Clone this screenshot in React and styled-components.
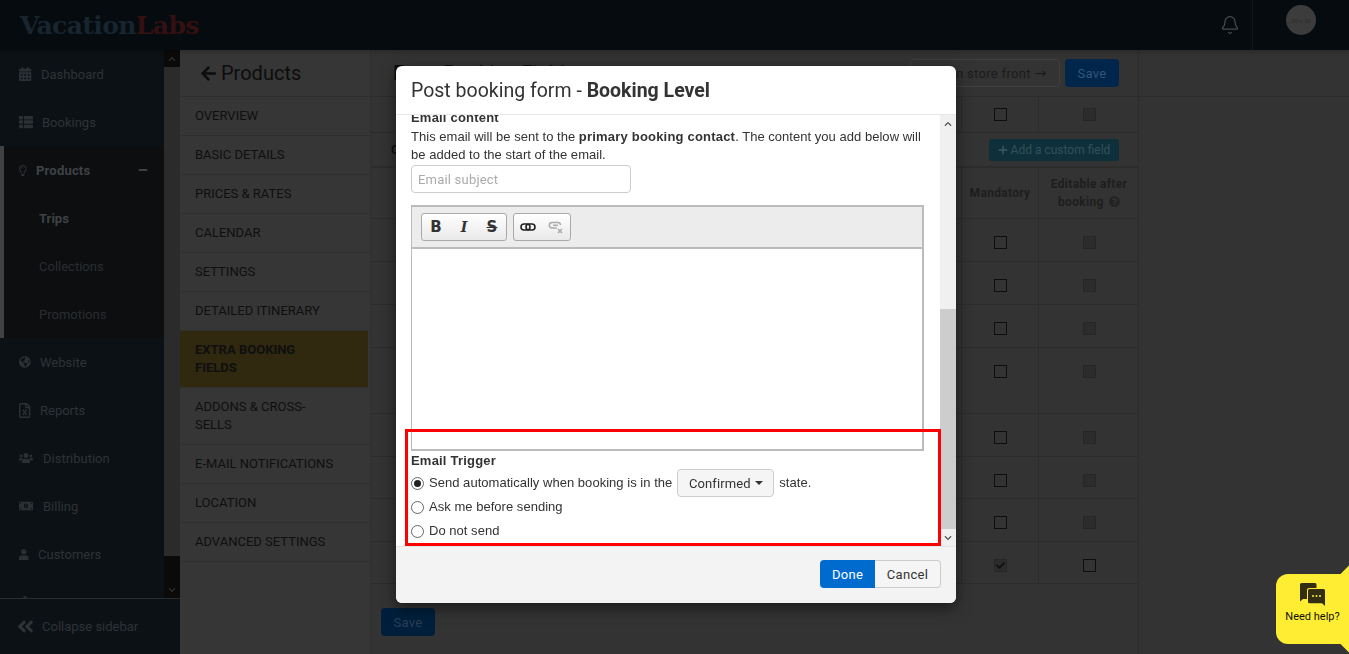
import React from 'react';
import styled, { createGlobalStyle } from 'styled-components';
import {
  FaCalendarAlt, FaThList, FaRegLightbulb, FaGlobeAmericas, FaRegFileExcel, FaUsers,
  FaMoneyBillAlt, FaUser, FaCog, FaMinus, FaAngleDoubleLeft, FaArrowLeft, FaPlus,
  FaQuestionCircle, FaChevronUp, FaChevronDown, FaCheck,
} from 'react-icons/fa';
import { Bell } from 'lucide-react';

const GlobalStyle = createGlobalStyle`
  html, body { margin: 0; height: 100%; overflow: hidden; background: #333; }
  body { font-family: Roboto, "Liberation Sans", sans-serif; font-size: 13px; color: #333; }
  * { box-sizing: border-box; }
`;

const Page = styled.div`
  height: 654px;
  display: flex;
  flex-direction: column;
`;

/* top bar */
const TopBar = styled.header`
  height: 50px;
  flex: none;
  background: #060b10;
  display: flex;
  align-items: center;
  padding-left: 20px;
  position: relative;
  z-index: 1;
  box-shadow: 0 2px 5px rgba(0, 0, 0, 0.2);
`;

const Logo = styled.div`
  font-family: "DejaVu Serif", serif;
  font-weight: 700;
  font-size: 25px;
  letter-spacing: -0.6px;
  color: #18242e;
  flex: 1;
  span { color: #351010; }
`;

const BellBox = styled.div`
  width: 44px;
  height: 50px;
  display: flex;
  align-items: center;
  justify-content: center;
  color: #4a4c4e;
`;

const UserBox = styled.div`
  width: 97px;
  height: 50px;
  border-left: 1px solid #14181c;
  padding: 5px 0 0 33px;
`;

const Avatar = styled.div`
  width: 30px;
  height: 30px;
  border-radius: 50%;
  background: #3c3c3c;
  color: #2b2b2b;
  font-size: 6px;
  display: flex;
  align-items: center;
  justify-content: center;
`;

const Shell = styled.div`
  flex: 1;
  display: flex;
  min-height: 0;
`;

/* dark sidebar */
const Sidebar = styled.aside`
  width: 180px;
  flex: none;
  background: #0c1115;
  display: flex;
  flex-direction: column;
`;

const NavArea = styled.div`
  flex: 1;
  display: flex;
  min-height: 0;
  overflow: hidden;
`;

const NavList = styled.nav`
  width: 164px;
  flex: none;
`;

const NavItem = styled.div`
  height: 48px;
  display: flex;
  align-items: center;
  padding-left: ${(p) => (p.$active ? 15 : 19)}px;
  gap: ${(p) => p.$gap}px;
  color: #2e3337;
  font-size: 13px;
  svg { color: #2b3035; flex: none; }
`;

const ProductsGroup = styled.div`
  background: #0d0e10;
  border-left: 4px solid #414141;
`;

const ProductsHead = styled(NavItem)`
  color: #3e4246;
  font-weight: 700;
  letter-spacing: 0.2px;
  padding-right: 16px;
  svg:last-child { margin-left: auto; color: #3e4246; font-size: 10px; }
`;

const SubItem = styled.div`
  height: 48px;
  display: flex;
  align-items: center;
  padding-left: 35px;
  color: ${(p) => (p.$active ? '#3e4144' : '#2a2d30')};
  font-weight: ${(p) => (p.$active ? 700 : 400)};
`;

const NavScroll = styled.div`
  width: 16px;
  flex: none;
  display: flex;
  flex-direction: column;
  background: #0a0a0b;
  color: #2e2e2e;
`;

const NavArrow = styled.div`
  height: 17px;
  flex: none;
  display: flex;
  align-items: center;
  justify-content: center;
  font-size: 8px;
`;

const NavThumb = styled.div`
  height: 489px;
  flex: none;
  background: #2b2b2b;
`;

const NavSpacer = styled.div`
  flex: 1;
`;

const Collapse = styled.div`
  height: 56px;
  flex: none;
  border-top: 1px solid #2a2d30;
  display: flex;
  align-items: center;
  padding-left: 16px;
  gap: 7px;
  color: #2e3337;
  svg { color: #2e3337; }
`;

/* product menu */
const ProductNav = styled.aside`
  width: 191px;
  flex: none;
  background: #363636;
  border-right: 1px solid #2f2f2f;
`;

const ProductTitle = styled.div`
  height: 47px;
  display: flex;
  align-items: center;
  gap: 4px;
  padding-left: 20px;
  font-size: 20px;
  color: #0d0d0d;
  border-bottom: 1px solid #2f2f2f;
  svg { font-size: 17px; }
`;

const MenuItem = styled.div`
  padding: 10px 30px 10px 15px;
  line-height: 18px;
  font-size: 13px;
  color: #0f0f0f;
  text-transform: uppercase;
  border-bottom: 1px solid #2f2f2f;
  font-weight: ${(p) => (p.$active ? 700 : 400)};
  background: ${(p) => (p.$active ? '#30280f' : 'transparent')};
  margin-right: ${(p) => (p.$active ? 2 : 0)}px;
`;

/* main table */
const Main = styled.main`
  width: 768px;
  flex: none;
  border-right: 1px solid #2c2c2c;
`;

const MainHead = styled.div`
  height: 47px;
  display: flex;
  align-items: center;
  padding: 0 19px 0 22px;
  gap: 5px;
  border-bottom: 1px solid #2c2c2c;
`;

const MainTitle = styled.div`
  flex: 1;
  font-size: 20px;
  font-weight: 500;
  color: #0c0c0c;
`;

const GhostButton = styled.div`
  width: 150px;
  height: 28px;
  padding-right: 8px;
  border: 1px solid #3f3f3f;
  border-radius: 4px;
  display: flex;
  align-items: center;
  justify-content: center;
  gap: 4px;
  color: #1c1c1c;
  letter-spacing: 0.3px;
  white-space: nowrap;
`;

const GhostArrow = styled.span`
  font-family: "DejaVu Sans", sans-serif;
  font-size: 14px;
  letter-spacing: 0;
`;

const SaveButton = styled.div`
  width: 54px;
  height: 28px;
  border-radius: 4px;
  background: #01264c;
  color: #34547a;
  display: flex;
  align-items: center;
  justify-content: center;
  letter-spacing: 0.3px;
`;

const Row = styled.div`
  height: ${(p) => p.$h}px;
  display: grid;
  grid-template-columns: 590px 77px 101px;
  border-bottom: 1px solid #2c2c2c;
`;

const Cell = styled.div`
  display: flex;
  align-items: center;
  justify-content: center;
  border-left: 1px solid #2c2c2c;
  &:first-child { border-left: 0; }
`;

const CheckCell = styled(Cell)`
  align-items: flex-start;
  padding-top: 17px;
`;

const HeadRow = styled(Row)`
  border-top: 2px solid #2c2c2c;
`;

const HeadCell = styled(Cell)`
  font-weight: 700;
  font-size: 12px;
  line-height: 18px;
  letter-spacing: 0.3px;
  color: #1e1e1e;
  text-align: center;
  svg { vertical-align: -1px; margin-left: 2px; color: #232323; font-size: 11px; }
`;

const CustomRow = styled.div`
  height: 33px;
  display: flex;
  align-items: center;
  justify-content: space-between;
  padding: 0 19px 0 20px;
`;

const CustomTitle = styled.div`
  font-weight: 700;
  color: #111;
`;

const AddButton = styled.div`
  width: 130px;
  height: 22px;
  border-radius: 3px;
  background: #0e303b;
  color: #33505c;
  display: flex;
  align-items: center;
  justify-content: center;
  gap: 3px;
  font-size: 12px;
  svg { font-size: 10px; }
`;

const Check = styled.span`
  width: 13px;
  height: 13px;
  display: flex;
  align-items: center;
  justify-content: center;
  color: #111;
  border: 1px solid ${(p) => (p.$off ? '#262626' : '#0d0d0d')};
  background: ${(p) => (p.$off ? '#2c2c2c' : 'transparent')};
  svg { font-size: 9px; }
`;

const BottomSave = styled(SaveButton)`
  margin: 24px 0 0 10px;
  background: #011f3c;
  color: #2a3f55;
`;

const RightFill = styled.div`
  flex: 1;
`;

const RightHead = styled.div`
  height: 47px;
  border-bottom: 1px solid #2c2c2c;
`;

/* modal */
const Modal = styled.section`
  position: fixed;
  z-index: 2;
  top: 66px;
  left: 396px;
  width: 560px;
  height: 537px;
  background: #fff;
  border-radius: 6px;
  box-shadow: 0 5px 15px rgba(0, 0, 0, 0.5);
  display: flex;
  flex-direction: column;
  overflow: hidden;
  font-family: "Liberation Sans", Arial, sans-serif;
`;

const ModalHeader = styled.div`
  height: 49px;
  flex: none;
  padding: 0 15px;
  display: flex;
  align-items: center;
  font-family: Roboto, sans-serif;
  font-size: 19.5px;
  color: #333;
  border-bottom: 1px solid #e8e8e8;
  white-space: pre;
  b { font-weight: 700; }
`;

const ModalBody = styled.div`
  flex: 1;
  min-height: 0;
  display: flex;
`;

const BodyContent = styled.div`
  flex: 1;
  min-width: 0;
  overflow: hidden;
  padding: 0 16px 0 15px;
  font-size: 13px;
  line-height: 18px;
  letter-spacing: 0.03px;
  strong { letter-spacing: 0.2px; }
`;

const Label = styled.div`
  font-weight: 700;
  letter-spacing: 0.2px;
  margin-top: ${(p) => p.$top}px;
`;

const Intro = styled.div`
  margin-top: 1px;
`;

const SubjectInput = styled.input`
  display: block;
  width: 220px;
  height: 28px;
  margin-top: 1px;
  padding: 0 6px;
  border: 1px solid #ccc;
  border-radius: 4px;
  font: 13px Roboto, sans-serif;
  letter-spacing: 0.2px;
  &::placeholder { color: #aaa; }
`;

const Editor = styled.div`
  margin-top: 12px;
  height: 246px;
  border: 2px solid #bbb;
  border-width: 2px 2px 2px 1px;
  display: flex;
  flex-direction: column;
`;

const Toolbar = styled.div`
  height: 42px;
  flex: none;
  background: #ececec;
  border-bottom: 2px solid #bbb;
  display: flex;
  align-items: center;
  gap: 6px;
  padding-left: 9px;
`;

const ToolGroup = styled.div`
  height: 28px;
  display: flex;
  border: 1px solid #aaa;
  border-radius: 3px;
  background: linear-gradient(#fff, #e9e9e9);
`;

const ToolButton = styled.div`
  width: 28px;
  display: flex;
  align-items: center;
  justify-content: center;
  font-family: ${(p) => (p.$italic ? '"DejaVu Serif", serif' : '"DejaVu Sans", sans-serif')};
  font-size: ${(p) => (p.$italic ? 14 : 15)}px;
  font-weight: 700;
  color: #333;
  font-style: ${(p) => (p.$italic ? 'italic' : 'normal')};
  text-decoration: ${(p) => (p.$strike ? 'line-through' : 'none')};
`;

const RadioRow = styled.label`
  height: 24px;
  display: flex;
  align-items: center;
  gap: 5px;
  margin-top: ${(p) => (p.$first ? 1 : 0)}px;
`;

const Radio = styled.span`
  width: 13px;
  height: 13px;
  flex: none;
  border: 1px solid #666;
  border-radius: 50%;
  display: flex;
  align-items: center;
  justify-content: center;
  &::after {
    content: '';
    width: 7px;
    height: 7px;
    border-radius: 50%;
    background: ${(p) => (p.$on ? '#222' : 'transparent')};
  }
`;

const StateButton = styled.div`
  width: 97px;
  height: 28px;
  border: 1px solid #ccc;
  border-radius: 4px;
  background: #f5f5f5;
  display: flex;
  align-items: center;
  justify-content: center;
  gap: 4px;
  font: 13px Roboto, sans-serif;
  letter-spacing: 0.1px;
  &::after {
    content: '';
    border: 4px solid transparent;
    border-top-color: #333;
    border-bottom: 0;
  }
`;

const ScrollTrack = styled.div`
  width: 16px;
  flex: none;
  background: #f0f0f0;
  display: flex;
  flex-direction: column;
  color: #555;
`;

const ScrollArrow = styled.div`
  height: 17px;
  flex: none;
  display: flex;
  align-items: center;
  justify-content: center;
  font-size: 8px;
`;

const ScrollGap = styled.div`
  height: 177px;
  flex: none;
`;

const ScrollThumb = styled.div`
  flex: 1;
  background: #cdcdcd;
`;

const ModalFooter = styled.div`
  height: 57px;
  flex: none;
  background: #f3f3f3;
  border-top: 1px solid #e5e5e5;
  padding: 13px 15px 0 0;
  display: flex;
  justify-content: flex-end;
  font-family: Roboto, sans-serif;
`;

const DoneButton = styled.div`
  width: 55px;
  height: 28px;
  background: #006bcf;
  color: #fff;
  border-radius: 4px 0 0 4px;
  display: flex;
  align-items: center;
  justify-content: center;
  letter-spacing: 0.3px;
`;

const CancelButton = styled(DoneButton)`
  width: 66px;
  background: #f5f5f5;
  color: #333;
  border: 1px solid #ccc;
  border-left: 0;
  border-radius: 0 4px 4px 0;
`;

const Highlight = styled.div`
  position: absolute;
  left: 9px;
  top: 363px;
  width: 536px;
  height: 117px;
  border: 3px solid #f00;
  pointer-events: none;
`;

/* chat bubble */
const Chat = styled.div`
  position: fixed;
  z-index: 3;
  right: 0;
  top: 574px;
  width: 73px;
  height: 70px;
  background: #ffed33;
  border-radius: 12px 0 0 12px;
  display: flex;
  flex-direction: column;
  align-items: center;
  padding-top: 9px;
  gap: 3px;
  font-size: 11px;
  color: #111;
  &::before, &::after {
    content: '';
    position: absolute;
    right: -6px;
    width: 12px;
    height: 12px;
    background: #ffed33;
    transform: rotate(45deg);
  }
  &::before { top: -6px; }
  &::after { bottom: -6px; }
`;

const menu = ['Overview', 'Basic details', 'Prices & rates', 'Calendar', 'Settings', 'Detailed itinerary', 'Extra booking fields', 'Addons & cross-sells', 'E-mail notifications', 'Location', 'Advanced settings'];

const rows = [
  [43, 0], [43, 0], [43, 0], [66, 0], [43, 0], [42, 0], [43, 0], [42, 1],
];

const LEFT = 'xMinYMid';

const LinkIcon = () => (
  <svg width="16" height="16" viewBox="0 0 16 16" fill="none" stroke="#222" strokeWidth="1.6">
    <rect x="1" y="5" width="9" height="6" rx="3" />
    <rect x="6" y="5" width="9" height="6" rx="3" />
  </svg>
);

const UnlinkIcon = () => (
  <svg width="16" height="16" viewBox="0 0 16 16" fill="none" stroke="#aaa" strokeWidth="1.5">
    <path d="M9 9H4a2.600 2.600 0 0 1 0-5.400h6a2.600 2.600 0 0 1 2.500 2.400" />
    <path d="M5 6.300h5" />
    <path d="M10 10l4 4M14 10l-4 4" />
  </svg>
);

const ChatIcon = () => (
  <svg width="27" height="24" viewBox="0 0 27 24">
    <path d="M1 1.500A1.500 1.500 0 0 1 2.500 0H16a1.500 1.500 0 0 1 1.500 1.500V5H10a2 2 0 0 0-2 2v9H4l-3 2.500z" fill="#332e12" />
    <path d="M9 7.500A1.500 1.500 0 0 1 10.500 6H24.500A1.500 1.500 0 0 1 26 7.500V23l-3-2.800H10.500A1.500 1.500 0 0 1 9 18.700z" fill="#332e12" />
    <circle cx="14" cy="13" r="1" fill="#ffed33" />
    <circle cx="17.500" cy="13" r="1" fill="#ffed33" />
    <circle cx="21" cy="13" r="1" fill="#ffed33" />
  </svg>
);

const App = () => (
  <Page>
    <GlobalStyle />
    <TopBar>
      <Logo>Vacation<span>Labs</span></Logo>
      <BellBox><Bell size={20} strokeWidth={1.5} /></BellBox>
      <UserBox><Avatar>30 x 30</Avatar></UserBox>
    </TopBar>
    <Shell>
      <Sidebar>
        <NavArea>
          <NavList>
            <NavItem $gap={8}><FaCalendarAlt size={14} preserveAspectRatio={LEFT} />Dashboard</NavItem>
            <NavItem $gap={9}><FaThList size={14} preserveAspectRatio={LEFT} />Bookings</NavItem>
            <ProductsGroup>
              <ProductsHead $active $gap={6}><FaRegLightbulb size={11} preserveAspectRatio={LEFT} />Products<FaMinus /></ProductsHead>
              <SubItem $active>Trips</SubItem>
              <SubItem>Collections</SubItem>
              <SubItem>Promotions</SubItem>
            </ProductsGroup>
            <NavItem $gap={9}><FaGlobeAmericas size={12} preserveAspectRatio={LEFT} />Website</NavItem>
            <NavItem $gap={6}><FaRegFileExcel size={15} preserveAspectRatio={LEFT} />Reports</NavItem>
            <NavItem $gap={10}><FaUsers size={14} preserveAspectRatio={LEFT} />Distribution</NavItem>
            <NavItem $gap={10}><FaMoneyBillAlt size={14} preserveAspectRatio={LEFT} />Billing</NavItem>
            <NavItem $gap={8}><FaUser size={11} preserveAspectRatio={LEFT} />Customers</NavItem>
            <NavItem $gap={8}><FaCog size={12} preserveAspectRatio={LEFT} />Settings</NavItem>
          </NavList>
          <NavScroll>
            <NavArrow><FaChevronUp /></NavArrow>
            <NavThumb />
            <NavSpacer />
            <NavArrow><FaChevronDown /></NavArrow>
          </NavScroll>
        </NavArea>
        <Collapse><FaAngleDoubleLeft size={19} />Collapse sidebar</Collapse>
      </Sidebar>

      <ProductNav>
        <ProductTitle><FaArrowLeft />Products</ProductTitle>
        {menu.map((item, index) => (
          <MenuItem key={item} $active={index === 6}>{item}</MenuItem>
        ))}
      </ProductNav>

      <Main>
        <MainHead>
          <MainTitle>Extra Booking Fields</MainTitle>
          <GhostButton>View on store front <GhostArrow>→</GhostArrow></GhostButton>
          <SaveButton>Save</SaveButton>
        </MainHead>
        <Row $h={36}>
          <Cell />
          <Cell><Check /></Cell>
          <Cell><Check $off /></Cell>
        </Row>
        <CustomRow>
          <CustomTitle>Custom fields</CustomTitle>
          <AddButton><FaPlus />Add a custom field</AddButton>
        </CustomRow>
        <HeadRow $h={53}>
          <HeadCell />
          <HeadCell>Mandatory</HeadCell>
          <HeadCell><div>Editable after<br />booking <FaQuestionCircle /></div></HeadCell>
        </HeadRow>
        {rows.map(([h, last], index) => (
          <Row key={index} $h={h}>
            <Cell />
            <CheckCell><Check $off={!!last}>{last ? <FaCheck /> : null}</Check></CheckCell>
            <CheckCell><Check $off={!last} /></CheckCell>
          </Row>
        ))}
        <BottomSave>Save</BottomSave>
      </Main>

      <RightFill><RightHead /></RightFill>
    </Shell>

    <Modal>
      <ModalHeader>Post booking form - <b>Booking Level</b></ModalHeader>
      <ModalBody>
        <BodyContent>
          <Label $top={-6}>Email content</Label>
          <Intro>This email will be sent to the <strong>primary booking contact</strong>. The content you add below will be added to the start of the email.</Intro>
          <SubjectInput placeholder="Email subject" readOnly />
          <Editor>
            <Toolbar>
              <ToolGroup>
                <ToolButton>B</ToolButton>
                <ToolButton $italic>I</ToolButton>
                <ToolButton $strike>S</ToolButton>
              </ToolGroup>
              <ToolGroup>
                <ToolButton><LinkIcon /></ToolButton>
                <ToolButton><UnlinkIcon /></ToolButton>
              </ToolGroup>
            </Toolbar>
          </Editor>
          <Label $top={1}>Email Trigger</Label>
          <RadioRow $first><Radio $on />Send automatically when booking is in the <StateButton>Confirmed</StateButton> state.</RadioRow>
          <RadioRow><Radio />Ask me before sending</RadioRow>
          <RadioRow><Radio />Do not send</RadioRow>
        </BodyContent>
        <ScrollTrack>
          <ScrollArrow><FaChevronUp /></ScrollArrow>
          <ScrollGap />
          <ScrollThumb />
          <ScrollArrow><FaChevronDown /></ScrollArrow>
        </ScrollTrack>
      </ModalBody>
      <ModalFooter>
        <DoneButton>Done</DoneButton>
        <CancelButton>Cancel</CancelButton>
      </ModalFooter>
      <Highlight />
    </Modal>

    <Chat><ChatIcon />Need help?</Chat>
  </Page>
);

export default App;
